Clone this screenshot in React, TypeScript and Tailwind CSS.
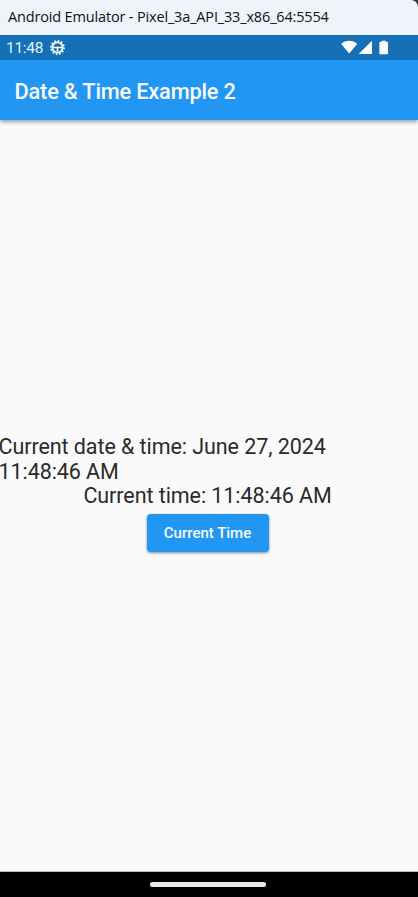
function GearIcon() {
  return (
    <svg className="ml-[7px] h-[15px] w-[15px]" viewBox="0 0 15 15" fill="none" stroke="#f4f8fc">
      <circle cx="7.5" cy="7.5" r="5.2" strokeWidth="1.9" />
      <circle cx="7.5" cy="7.5" r="6.7" strokeWidth="1.5" strokeDasharray="1.75 1.75" />
      <path d="M2.8 7.5H12.2M7.5 7.5V12.4" strokeWidth="1.6" />
    </svg>
  );
}

function StatusIcons() {
  return (
    <svg className="h-[15px] w-[48px]" viewBox="0 0 48 15" fill="#ffffff">
      <path d="M0.2 3.9C4.6 -0.3 11.8 -0.3 16.2 3.9L8.2 13.6Z" />
      <path d="M31 0.8V14H17.6Z" />
      <path d="M40.7 0.7H44.7V1.8H46.2Q47 1.8 47 2.6V13.4Q47 14.2 46.2 14.2H39.2Q38.4 14.2 38.4 13.4V2.6Q38.4 1.8 39.2 1.8H40.7Z" />
    </svg>
  );
}

export default function App() {
  return (
    <div className="flex h-[897px] w-[418px] flex-col overflow-hidden bg-[#333] font-['Roboto',sans-serif]">
      <div className="flex h-[35px] shrink-0 items-center rounded-tr-[7px] bg-[#eff4fb] pb-[2px] pl-2 font-['Open_Sans',sans-serif] text-[14.5px] tracking-[-0.16px] whitespace-nowrap text-[#111]">
        <span>Android Emulator - Pixel_3a_API_33_x86_64:5554</span>
      </div>
      <div className="flex h-[25px] shrink-0 items-center justify-between bg-[#1470b7] pr-[29px] pl-[6px] text-[15.5px] text-[#eaf2f9]">
        <div className="flex items-center">
          <span className="pt-[2px] tracking-[-0.3px]">11:48</span>
          <GearIcon />
        </div>
        <StatusIcons />
      </div>
      <header className="z-10 flex h-[60px] shrink-0 items-center bg-[#2196f3] pt-[4px] pl-[14.5px] shadow-[0_2px_4px_rgba(0,0,0,0.38)]">
        <h1 className="text-[21.8px] font-medium tracking-[-0.2px] whitespace-nowrap text-[#f8fbff]">Date &amp; Time Example 2</h1>
      </header>
      <main className="flex flex-1 flex-col items-center border-b border-[#bbb] bg-[#fafafa] pt-[314.8px] text-[21.5px] leading-[24.7px] tracking-[-0.07px] text-[#2a2a2a]">
        <p className="-ml-[1.5px] self-start whitespace-nowrap">
          Current date &amp; time: June 27, 2024
          <br />
          11:48:46 AM
        </p>
        <p className="-ml-[3px] whitespace-nowrap">Current time: 11:48:46 AM</p>
        <button className="mt-[5.1px] -ml-[3px] flex h-[38px] w-[122px] items-center justify-center rounded-[4px] bg-[#2196f3] text-[15px] font-medium tracking-normal whitespace-nowrap text-[#f8fbff] shadow-[0_1px_3px_rgba(0,0,0,0.45)]">
          Current Time
        </button>
      </main>
      <footer className="flex h-[25px] shrink-0 justify-center bg-black pt-[10px]">
        <div className="-ml-[3px] h-[5px] w-[116px] rounded-full bg-[#e8e8e8]" />
      </footer>
    </div>
  );
}
